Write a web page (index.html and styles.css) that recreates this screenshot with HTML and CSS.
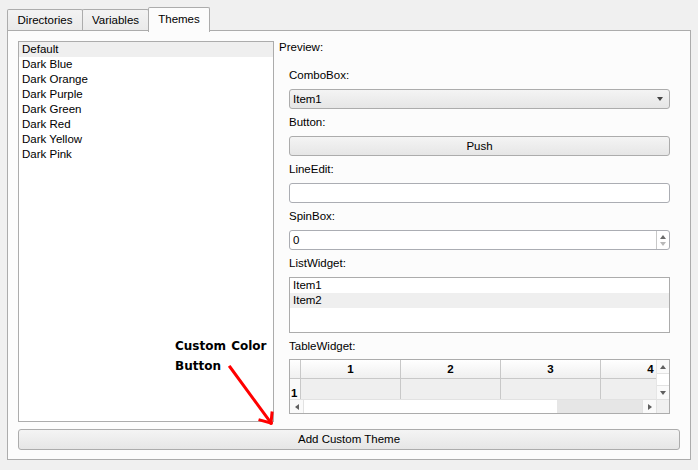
FILE: index.html
```html
<!DOCTYPE html>
<html>
<head>
<meta charset="utf-8">
<link rel="stylesheet" href="styles.css">
</head>
<body>
<div class="window">
  <div class="tabbar">
    <div class="tab tab-dir">Directories</div>
    <div class="tab tab-var">Variables</div>
    <div class="tab tab-themes active">Themes</div>
  </div>
  <div class="pane">
    <div class="theme-list">
      <div class="row sel">Default</div>
      <div class="row">Dark Blue</div>
      <div class="row">Dark Orange</div>
      <div class="row">Dark Purple</div>
      <div class="row">Dark Green</div>
      <div class="row">Dark Red</div>
      <div class="row">Dark Yellow</div>
      <div class="row">Dark Pink</div>
    </div>
    <div class="preview">
      <div class="label">Preview:</div>
      <div class="widgets">
        <div class="label">ComboBox:</div>
        <div class="combo"><span>Item1</span><span class="combo-arrow"></span></div>
        <div class="label">Button:</div>
        <div class="push">Push</div>
        <div class="label">LineEdit:</div>
        <div class="lineedit"></div>
        <div class="label">SpinBox:</div>
        <div class="spin">
          <span class="spin-val">0</span>
          <span class="spin-btns"><span class="up"></span><span class="down"></span></span>
        </div>
        <div class="label">ListWidget:</div>
        <div class="listw">
          <div class="row">Item1</div>
          <div class="row sel">Item2</div>
        </div>
        <div class="label">TableWidget:</div>
        <div class="table">
          <div class="viewport">
            <div class="thead">
              <div class="corner-h"></div>
              <div class="hcell">1</div>
              <div class="hcell">2</div>
              <div class="hcell">3</div>
              <div class="hcell">4</div>
            </div>
            <div class="trow">
              <div class="vhead">1</div>
              <div class="cell"></div>
              <div class="cell"></div>
              <div class="cell"></div>
              <div class="cell"></div>
            </div>
          </div>
          <div class="vscroll">
            <div class="sb-btn"><span class="tri-up"></span></div>
            <div class="sb-mid"></div>
            <div class="sb-btn"><span class="tri-down"></span></div>
          </div>
          <div class="hscroll">
            <div class="sb-btn-h"><span class="tri-left"></span></div>
            <div class="track"></div>
            <div class="thumb"></div>
            <div class="sb-btn-h right"><span class="tri-right"></span></div>
          </div>
          <div class="sb-corner"></div>
        </div>
      </div>
    </div>
    <div class="add-btn">Add Custom Theme</div>
  </div>
</div>
<div class="note">Custom Color<br>Button</div>
<svg class="arrow" width="60" height="80" viewBox="0 0 60 80">
  <g stroke="#ff0000" stroke-width="3" fill="none" stroke-linecap="square">
    <line x1="10" y1="12" x2="51" y2="68"/>
    <line x1="51" y1="68" x2="40" y2="65"/>
    <line x1="51" y1="68" x2="52" y2="58"/>
  </g>
</svg>
</body>
</html>
```
FILE: styles.css
```css
html, body {
  margin: 0;
  padding: 0;
}
body {
  width: 698px;
  height: 470px;
  background: #f0f0f0;
  font-family: "Liberation Sans", Arial, sans-serif;
  font-size: 11.5px;
  color: #000;
  position: relative;
  overflow: hidden;
}
.window {
  padding: 7px 0 0 7px;
}
.tabbar {
  display: flex;
  align-items: flex-end;
  height: 24px;
}
.tab {
  box-sizing: border-box;
  height: 22px;
  border: 1px solid #acacac;
  border-bottom: none;
  border-radius: 2px 2px 0 0;
  background: linear-gradient(#f3f3f3, #e9e9e9);
  text-align: center;
  line-height: 21px;
}
.tab-dir { width: 76px; }
.tab-var { width: 67px; margin-left: -1px; }
.tab-themes {
  width: 62px;
  margin-left: -1px;
  height: 25px;
  line-height: 23px;
  margin-bottom: -1px;
  background: #fcfcfc;
  position: relative;
  z-index: 2;
}
.pane {
  box-sizing: border-box;
  width: 684px;
  height: 430px;
  margin-top: -1px;
  border: 1px solid #acacac;
  background: #fcfcfc;
  padding: 10px 10px 9px 10px;
  display: grid;
  grid-template-columns: 256px 1fr;
  grid-template-rows: 1fr 21px;
  column-gap: 5px;
  row-gap: 7px;
  position: relative;
  z-index: 1;
}
.theme-list {
  box-sizing: border-box;
  border: 1px solid #acacac;
  background: #fff;
}
.row {
  height: 15px;
  line-height: 15px;
  padding-left: 3px;
}
.row.sel {
  background: #efefef;
}
.preview {
  display: flex;
  flex-direction: column;
}
.label {
  height: 13px;
  line-height: 13px;
  white-space: nowrap;
}
.widgets {
  margin-top: 15px;
  padding: 0 10px;
  display: flex;
  flex-direction: column;
  gap: 7px;
}
.combo, .push {
  box-sizing: border-box;
  height: 20px;
  border: 1px solid #acacac;
  border-radius: 3px;
  background: linear-gradient(#f4f4f4, #e6e6e6);
  line-height: 18px;
}
.combo {
  display: flex;
  justify-content: space-between;
  align-items: center;
  padding: 0 6px 0 3px;
}
.combo-arrow {
  width: 0;
  height: 0;
  border-left: 3.5px solid transparent;
  border-right: 3.5px solid transparent;
  border-top: 4px solid #444;
}
.push {
  text-align: center;
}
.lineedit, .spin {
  box-sizing: border-box;
  height: 20px;
  border: 1px solid #abadb3;
  border-radius: 3px;
  background: #fff;
}
.spin {
  display: flex;
  align-items: stretch;
}
.spin-val {
  flex: 1;
  padding-left: 3px;
  line-height: 18px;
}
.spin-btns {
  width: 12px;
  border-left: 1px solid #c8c8c8;
  display: flex;
  flex-direction: column;
  align-items: center;
  justify-content: center;
  gap: 3px;
}
.spin-btns .up {
  width: 0; height: 0;
  border-left: 3px solid transparent;
  border-right: 3px solid transparent;
  border-bottom: 4px solid #6a6a6a;
}
.spin-btns .down {
  width: 0; height: 0;
  border-left: 3px solid transparent;
  border-right: 3px solid transparent;
  border-top: 4px solid #b8b8b8;
}
.listw {
  box-sizing: border-box;
  height: 56px;
  border: 1px solid #acacac;
  background: #fff;
}
.table {
  box-sizing: border-box;
  height: 55px;
  margin-top: -1px;
  border: 1px solid #acacac;
  background: #fff;
  display: grid;
  grid-template-columns: 1fr 13px;
  grid-template-rows: 1fr 14px;
}
.viewport {
  overflow: hidden;
  background: #fff;
}
.thead, .trow {
  display: flex;
  width: max-content;
}
.thead {
  height: 19px;
}
.corner-h {
  box-sizing: border-box;
  width: 11px;
  border-right: 1px solid #c8c8c8;
  border-bottom: 1px solid #c8c8c8;
  background: linear-gradient(#ffffff, #f0f0f0);
}
.hcell {
  box-sizing: border-box;
  width: 100px;
  border-right: 1px solid #c8c8c8;
  border-bottom: 1px solid #c8c8c8;
  background: linear-gradient(#ffffff, #efefef);
  text-align: center;
  font-weight: bold;
  line-height: 18px;
}
.trow {
  height: 20px;
}
.vhead {
  box-sizing: border-box;
  width: 11px;
  border-right: 1px solid #c8c8c8;
  background: #fafafa;
  font-weight: bold;
  display: flex;
  align-items: flex-end;
  padding-left: 1px;
  line-height: 12px;
}
.cell {
  box-sizing: border-box;
  width: 100px;
  border-right: 1px solid #c8c8c8;
  background: #efefef;
}
.vscroll {
  display: flex;
  flex-direction: column;
  border-left: 1px solid #e6e6e6;
  background: #fafafa;
}
.sb-btn {
  height: 13px;
  display: flex;
  align-items: center;
  justify-content: center;
}
.sb-mid {
  flex: 1;
  border-top: 1px solid #e2e2e2;
  border-bottom: 1px solid #e2e2e2;
  background: #fff;
}
.tri-up {
  width: 0; height: 0;
  border-left: 3.5px solid transparent;
  border-right: 3.5px solid transparent;
  border-bottom: 4px solid #606060;
}
.tri-down {
  width: 0; height: 0;
  border-left: 3.5px solid transparent;
  border-right: 3.5px solid transparent;
  border-top: 4px solid #606060;
}
.hscroll {
  display: flex;
  border-top: 1px solid #e2e2e2;
  background: #fafafa;
}
.sb-btn-h {
  width: 14px;
  display: flex;
  align-items: center;
  justify-content: center;
  border-right: 1px solid #e2e2e2;
  box-sizing: border-box;
}
.sb-btn-h.right {
  border-right: none;
  border-left: 1px solid #e2e2e2;
}
.tri-left {
  width: 0; height: 0;
  border-top: 3.5px solid transparent;
  border-bottom: 3.5px solid transparent;
  border-right: 4px solid #606060;
}
.tri-right {
  width: 0; height: 0;
  border-top: 3.5px solid transparent;
  border-bottom: 3.5px solid transparent;
  border-left: 4px solid #606060;
}
.track {
  flex: 1;
  background: #fff;
}
.thumb {
  width: 85px;
  background: #e6e6e6;
}
.sb-corner {
  background: #f0f0f0;
  border-top: 1px solid #e2e2e2;
  border-left: 1px solid #e2e2e2;
}
.add-btn {
  grid-column: 1 / 3;
  box-sizing: border-box;
  border: 1px solid #acacac;
  border-radius: 3px;
  background: linear-gradient(#f4f4f4, #e6e6e6);
  text-align: center;
  line-height: 19px;
}
.note {
  position: absolute;
  left: 175px;
  top: 336px;
  font-family: "DejaVu Sans", sans-serif;
  font-weight: bold;
  font-size: 12px;
  line-height: 20px;
  word-spacing: 1px;
  z-index: 5;
}
.arrow {
  position: absolute;
  left: 220px;
  top: 355px;
  z-index: 5;
}
```
